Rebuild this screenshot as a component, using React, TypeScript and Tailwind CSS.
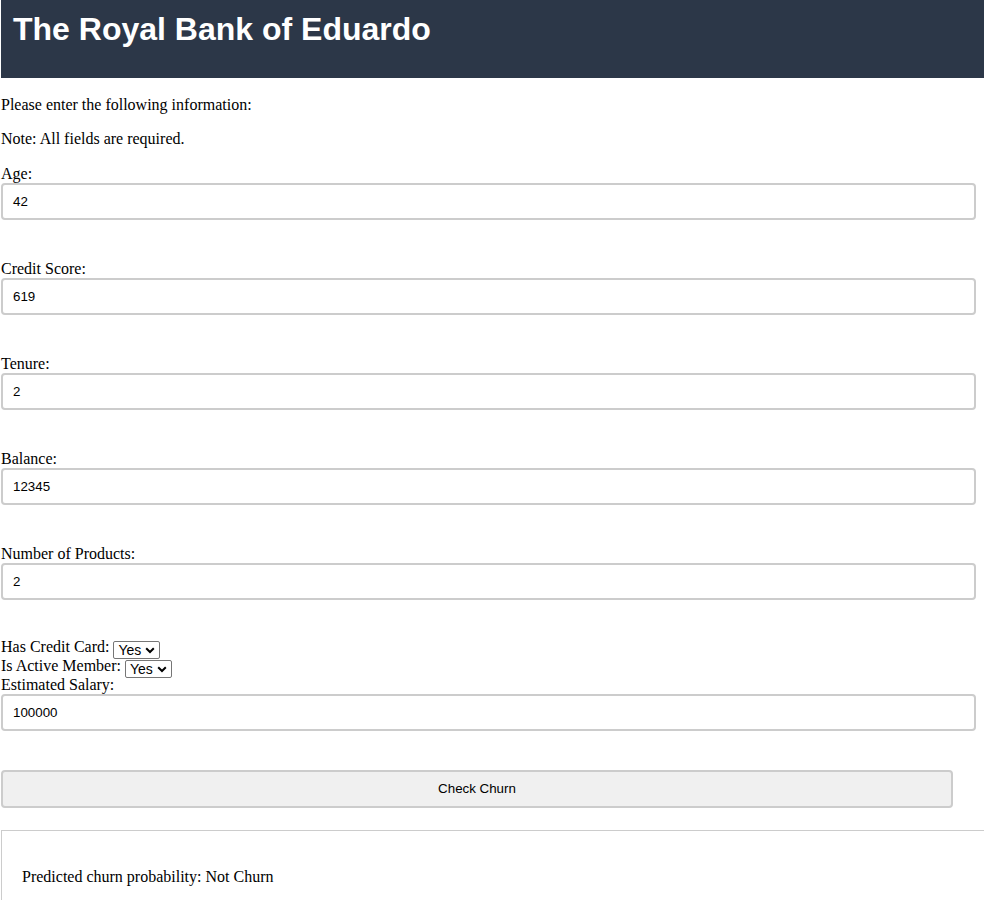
import React from "react";

const serif = { fontFamily: '"Liberation Serif", "Times New Roman", serif' };

function Field({ label, value }: { label: string; value: string }) {
  return (
    <div className="mb-[39px]">
      <label className="block text-[16px] leading-[19px] text-black">{label}</label>
      <div className="flex h-[37px] w-[975px] items-center rounded-[4px] border-2 border-[#cccccc] bg-white px-[10px] font-['Liberation_Sans',Arial,sans-serif] text-[13.33px] text-black">
        {value}
      </div>
    </div>
  );
}

function Select({ value }: { value: string }) {
  return (
    <span className="ml-[4px] inline-flex h-[18px] items-center gap-[4px] rounded-[2px] border border-[#767676] bg-white pl-[4px] pr-[4px] align-[-3px] font-['Liberation_Sans',Arial,sans-serif] text-[14px] leading-none text-black">
      {value}
      <svg width="10" height="7" viewBox="0 0 10 7" fill="none">
        <path d="M1.2 1.3 L5 5 L8.8 1.3" stroke="#000" strokeWidth="2" />
      </svg>
    </span>
  );
}

export default function App() {
  return (
    <div className="min-h-[900px] bg-white pl-[1px]" style={serif}>
      <header className="h-[78px] bg-[#2c3748] pl-[12px] pt-[11px]">
        <h1 className="font-['Liberation_Sans',Arial,sans-serif] text-[32px] font-bold leading-[37px] text-white">
          The Royal Bank of Eduardo
        </h1>
      </header>
      <p className="mt-[18px] text-[16px] leading-[18px] text-black">Please enter the following information:</p>
      <p className="mb-[16px] mt-[16px] text-[16px] leading-[18px] text-black">Note: All fields are required.</p>
      <form>
        <Field label="Age:" value="42" />
        <Field label="Credit Score:" value="619" />
        <Field label="Tenure:" value="2" />
        <Field label="Balance:" value="12345" />
        <Field label="Number of Products:" value="2" />
        <div className="-mt-[1px] h-[18px] text-[16px] leading-[18px] text-black">
          Has Credit Card:
          <Select value="Yes" />
        </div>
        <div className="h-[19px] text-[16px] leading-[19px] text-black">
          Is Active Member:
          <Select value="Yes" />
        </div>
        <Field label="Estimated Salary:" value="100000" />
        <button
          type="button"
          className="flex h-[38px] w-[952px] items-center justify-center rounded-[4px] border-2 border-[#cccccc] bg-[#f0f0f0] font-['Liberation_Sans',Arial,sans-serif] text-[13.33px] text-black"
        >
          Check Churn
        </button>
      </form>
      <div className="mt-[22px] border-l border-t border-[#cccccc] px-[20px] pb-[20px] pt-[37px]">
        <p className="text-[16px] leading-[18px] text-black">Predicted churn probability: Not Churn</p>
      </div>
    </div>
  );
}
